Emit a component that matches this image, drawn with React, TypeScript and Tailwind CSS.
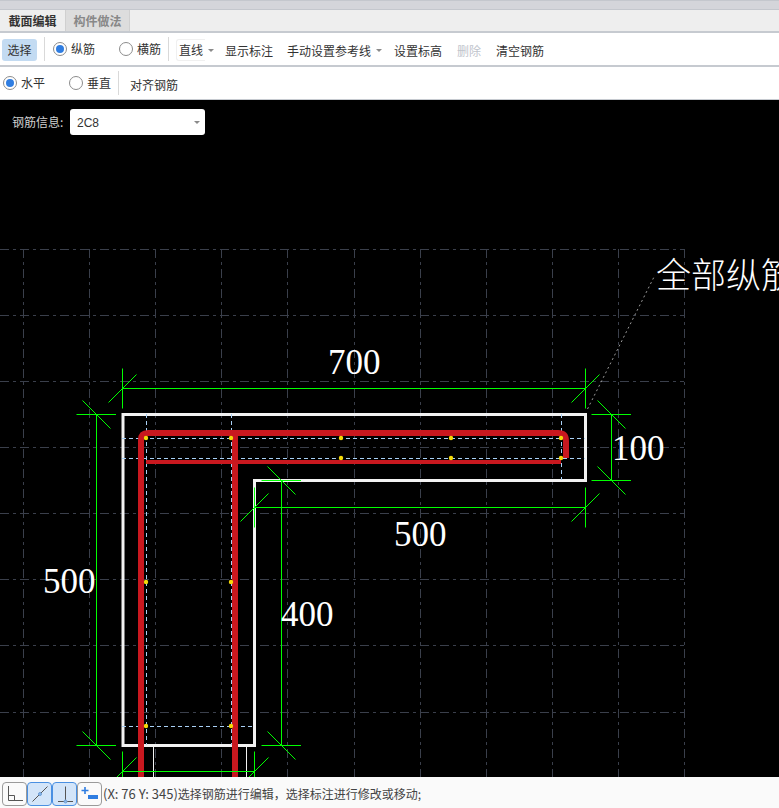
import type { ReactNode } from 'react';

const CJK = "font-['Noto_Sans_CJK_SC','Noto_Sans',sans-serif]";

const gridX = [23, 89, 155, 221, 287, 354, 420, 486, 552, 618, 684];
const gridY = [249, 315, 381, 447, 513, 579, 645, 712, 778];

const dots = [
  [146, 438], [231, 438], [341, 438], [451, 438], [561, 438],
  [341, 458], [451, 458], [561, 458],
  [146, 582], [231, 582], [146, 726], [231, 726],
];

const CANVAS_TOP = 100;

// 标注：主线 + 两端刻度（十字 + 斜杠）
function HTick({ x, y }: { x: number; y: number }) {
  return <path d={`M${x - 20} ${y}H${x + 19.5}M${x - 14} ${y - 14}L${x + 14} ${y + 14}`} />;
}
function VTick({ x, y }: { x: number; y: number }) {
  return <path d={`M${x} ${y - 20}V${y + 20}M${x - 14} ${y + 14}L${x + 14} ${y - 14}`} />;
}

function Drawing() {
  return (
    <svg
      className="absolute left-0 top-0"
      width={779}
      height={708}
      viewBox={`0 ${CANVAS_TOP} 779 708`}
      fill="none"
    >
      <g stroke="#3a3f4b" strokeWidth={1} strokeDasharray="9 4 3 4">
        {gridX.map((x) => (
          <path key={x} d={`M${x + 0.5} 249V808`} />
        ))}
        {gridY.map((y) => (
          <path key={y} d={`M0 ${y + 0.5}H684`} />
        ))}
      </g>

      <path d="M587.5 409L655 275" stroke="#9a9a9a" strokeWidth={1} strokeDasharray="2 3" />

      <path
        d="M123 745.5V414.5H585.5V480.5H254.5V745.5Z"
        stroke="#f2f2f2"
        strokeWidth={3}
      />
      <path d="M153.5 745V780M246.5 745V780" stroke="#f2f2f2" strokeWidth={1} />

      <g stroke="#a9d0f5" strokeWidth={1} strokeDasharray="4 3">
        <path d="M122 438.5H585M122 458.5H585M122 726.5H254" />
        <path d="M146.5 414V745M231.5 414V745M561.5 414V480" />
      </g>

      <g stroke="#c9181f">
        <path d="M141 790V440Q141 433 148 433H558Q566 433 566 441V458" strokeWidth={6} />
        <path d="M235 433V790" strokeWidth={6} />
        <path d="M146 462H561" strokeWidth={4} />
      </g>

      {dots.map(([x, y]) => (
        <circle key={`${x}-${y}`} cx={x} cy={y} r={2.2} fill="#f5d90a" />
      ))}

      <g stroke="#00ff00" strokeWidth={1} shapeRendering="crispEdges">
        <path d="M122 388.5H586M96.5 414V745M611.5 414V480M254 507.5H586M281.5 480V745M122 771.5H254" />
      </g>
      <g stroke="#00ff00" strokeWidth={1}>
        <VTick x={122.5} y={388.5} />
        <VTick x={585.5} y={388.5} />
        <HTick x={96.5} y={414.5} />
        <HTick x={96.5} y={745.5} />
        <HTick x={611.5} y={414.5} />
        <HTick x={611.5} y={480.5} />
        <VTick x={254.5} y={507.5} />
        <VTick x={585.5} y={507.5} />
        <HTick x={281.5} y={480.5} />
        <HTick x={281.5} y={745.5} />
        <VTick x={122.5} y={771.5} />
        <VTick x={254.5} y={771.5} />
      </g>

      <g fill="#ffffff" fontFamily="'Liberation Serif', serif" fontSize={35}>
        <text x={328} y={374}>700</text>
        <text x={612} y={460}>100</text>
        <text x={394} y={546}>500</text>
        <text x={43} y={593}>500</text>
        <text x={281} y={626}>400</text>
      </g>
      <text
        x={656}
        y={288}
        fill="#ffffff"
        fontSize={35}
        fontFamily="'Noto Sans CJK SC', serif"
        fontWeight={300}
      >
        全部纵筋
      </text>
    </svg>
  );
}

function Radio({ checked, label, className }: { checked?: boolean; label: string; className?: string }) {
  return (
    <span className={`flex items-center gap-[4px] ${className ?? ''}`}>
      <span className="flex h-[14px] w-[14px] items-center justify-center rounded-full border border-[#8c8c8c] bg-white">
        {checked && <span className="h-[8px] w-[8px] rounded-full bg-[#2f7de1]" />}
      </span>
      <span>{label}</span>
    </span>
  );
}

const Sep = ({ className }: { className?: string }) => <span className={`h-[24px] w-px bg-[#d9d9d9] ${className ?? ''}`} />;

const Caret = ({ className }: { className?: string }) => (
  <span className={`h-0 w-0 border-x-[3px] border-t-[3px] border-x-transparent border-t-[#8a8a8a] ${className ?? ''}`} />
);

function ToolButton({ active, children }: { active?: boolean; children: ReactNode }) {
  return (
    <span
      className={`flex h-[24px] w-[25px] items-center justify-center rounded-[4px] border ${
        active ? 'border-[#4a90e2] bg-[#d3e5f9]' : 'border-[#9a9a9a] bg-[#fafafa]'
      }`}
    >
      {children}
    </span>
  );
}

export default function App() {
  return (
    <div className={`flex h-[808px] w-[779px] flex-col overflow-hidden bg-black text-[12px] text-[#333] ${CJK}`}>
      <div className="h-[10px] shrink-0 border-y border-y-[#c4c7cd] bg-[#d4d5da]" />
      <div className="flex h-[21px] shrink-0 bg-[#eeeeee]">
        <span className="flex w-[65px] items-center justify-center font-bold text-[#333]">截面编辑</span>
        <span className="flex w-[65px] items-center justify-center border-x border-[#d0d0d0] bg-[#dddddd] font-bold text-[#888]">
          构件做法
        </span>
      </div>

      <div className="flex h-[36px] shrink-0 items-center border-y-2 border-y-[#c6cad0] bg-white">
        <span className="ml-[2px] mt-[2px] flex h-[22px] w-[35px] items-center justify-center rounded-[3px] bg-[#c3dbf2]">选择</span>
        <Sep className="ml-[7px]" />
        <Radio checked label="纵筋" className="mb-[1px] ml-[8px] w-[66px]" />
        <Radio label="横筋" className="mb-[1px] w-[49px]" />
        <Sep />
        <span className="ml-[7px] mt-[2px] flex h-[22px] w-[29px] items-center justify-center rounded-l-[3px] border border-r-0 border-[#f0f0f0]">
          直线
        </span>
        <Caret className="ml-[3px] mt-[2px]" />
        <span className="ml-[11px] mt-[3px]">显示标注</span>
        <span className="ml-[14px] mt-[3px]">手动设置参考线</span>
        <Caret className="ml-[5px] mt-[2px]" />
        <span className="ml-[12px] mt-[3px]">设置标高</span>
        <span className="ml-[15px] mt-[3px] text-[#c0c4cc]">删除</span>
        <span className="ml-[15px] mt-[3px]">清空钢筋</span>
      </div>

      <div className="flex h-[33px] shrink-0 items-center border-b border-b-[#c6cad0] bg-white">
        <Radio checked label="水平" className="ml-[3px] w-[66px]" />
        <Radio label="垂直" className="w-[49px]" />
        <Sep />
        <span className="ml-[11px] mt-[4px]">对齐钢筋</span>
      </div>

      <div className="relative min-h-0 flex-1">
        <Drawing />
        <div className="absolute left-[12px] top-[9px] flex items-center">
          <span className="w-[58px] text-[#cfcfcf]">钢筋信息:</span>
          <span className="flex h-[26px] w-[135px] items-center justify-between rounded-[3px] bg-white pl-[7px] pr-[5px]">
            <span className="pt-[1px] font-['Liberation_Sans',sans-serif] text-[12px]">2C8</span>
            <Caret />
          </span>
        </div>
      </div>

      <div className="z-10 flex h-[31px] shrink-0 items-center bg-[#fafafa] pl-[2px] pt-[2px]">
        <ToolButton>
          <svg width="18" height="18" viewBox="0 0 18 18" fill="none" stroke="#555" strokeWidth="1">
            <path d="M2.5 1V15.5H17M2.5 10.5H8.5V15.5" />
          </svg>
        </ToolButton>
        <ToolButton active>
          <svg width="20" height="20" viewBox="0 0 20 20" fill="none" stroke="#555" strokeWidth="1">
            <path d="M2.5 17.5L17.5 2.5" />
            <circle cx="10" cy="10" r="1.5" fill="#8db8e8" stroke="#6d9fd8" />
          </svg>
        </ToolButton>
        <ToolButton active>
          <svg width="20" height="20" viewBox="0 0 20 20" fill="none" stroke="#555" strokeWidth="1">
            <path d="M10.5 2.5V17M3 17.5H18" />
            <circle cx="10.5" cy="17.5" r="1.5" fill="#8db8e8" stroke="#6d9fd8" />
          </svg>
        </ToolButton>
        <ToolButton>
          <svg width="20" height="20" viewBox="0 0 20 20" fill="none">
            <path d="M5 3V10M1.5 6.5H8.5" stroke="#2f7de1" strokeWidth="1.6" />
            <rect x="8" y="11" width="10" height="4" fill="#2f7de1" />
          </svg>
        </ToolButton>
        <span className="ml-[1px] text-[12px] text-[#444]">
          <span className="text-[13px]">(X: 76 Y: 345)</span>选择钢筋进行编辑，选择标注进行修改或移动;
        </span>
      </div>
    </div>
  );
}
